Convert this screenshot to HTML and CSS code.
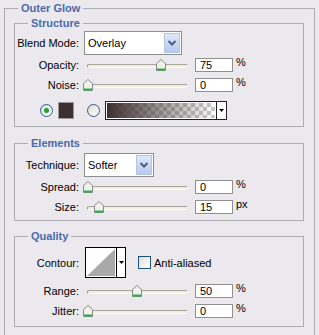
FILE: index.html
```html
<!doctype html>
<html>
<head>
	<meta charset="utf-8">
	<title>Outer Glow</title>
	<link rel="stylesheet" href="styles.css">
</head>
<body>
	<div class="panel">
		<div class="group-title">Outer Glow</div>

		<div class="group structure">
			<div class="group-title">Structure</div>
			<div class="row row-select">
				<span class="label">Blend Mode:</span>
				<div class="select select-blend">
					<span class="select-text">Overlay</span>
					<span class="select-btn"><svg width="14" height="18" viewBox="0 0 14 18"><path d="M3.5 7 L7 10.5 L10.5 7" fill="none" stroke="#4a5d82" stroke-width="2"/></svg></span>
				</div>
			</div>
			<div class="row">
				<span class="label">Opacity:</span>
				<div class="slider">
					<div class="track"></div>
					<svg class="thumb" style="left:69px" width="10" height="12" viewBox="0 0 10 12"><path d="M5 0.5 L9.5 4.5 V11.5 H0.5 V4.5 Z" fill="#f1f1ec" stroke="#8a8a86"/><path d="M1 10.5 H9" stroke="#2fae4c" stroke-width="2"/></svg>
				</div>
				<input class="num" type="text" value="75">
				<span class="unit">%</span>
			</div>
			<div class="row">
				<span class="label">Noise:</span>
				<div class="slider">
					<div class="track"></div>
					<svg class="thumb" style="left:-4px" width="10" height="12" viewBox="0 0 10 12"><path d="M5 0.5 L9.5 4.5 V11.5 H0.5 V4.5 Z" fill="#f1f1ec" stroke="#8a8a86"/><path d="M1 10.5 H9" stroke="#2fae4c" stroke-width="2"/></svg>
				</div>
				<input class="num" type="text" value="0">
				<span class="unit">%</span>
			</div>
			<div class="color-row">
				<span class="radio"><span class="radio-dot"></span></span>
				<span class="swatch"></span>
				<span class="radio radio-second"></span>
				<div class="gradient">
					<span class="gradient-fill"></span>
					<span class="gradient-arrow"><svg width="5" height="3" viewBox="0 0 5 3"><path d="M0 0 H5 L2.5 3 Z" fill="#000"/></svg></span>
				</div>
			</div>
		</div>

		<div class="group elements">
			<div class="group-title">Elements</div>
			<div class="row row-select">
				<span class="label">Technique:</span>
				<div class="select select-tech">
					<span class="select-text">Softer</span>
					<span class="select-btn"><svg width="14" height="18" viewBox="0 0 14 18"><path d="M3.5 7 L7 10.5 L10.5 7" fill="none" stroke="#4a5d82" stroke-width="2"/></svg></span>
				</div>
			</div>
			<div class="row">
				<span class="label">Spread:</span>
				<div class="slider">
					<div class="track"></div>
					<svg class="thumb" style="left:-4px" width="10" height="12" viewBox="0 0 10 12"><path d="M5 0.5 L9.5 4.5 V11.5 H0.5 V4.5 Z" fill="#f1f1ec" stroke="#8a8a86"/><path d="M1 10.5 H9" stroke="#2fae4c" stroke-width="2"/></svg>
				</div>
				<input class="num" type="text" value="0">
				<span class="unit">%</span>
			</div>
			<div class="row">
				<span class="label">Size:</span>
				<div class="slider">
					<div class="track"></div>
					<svg class="thumb" style="left:7px" width="10" height="12" viewBox="0 0 10 12"><path d="M5 0.5 L9.5 4.5 V11.5 H0.5 V4.5 Z" fill="#f1f1ec" stroke="#8a8a86"/><path d="M1 10.5 H9" stroke="#2fae4c" stroke-width="2"/></svg>
				</div>
				<input class="num" type="text" value="15">
				<span class="unit">px</span>
			</div>
		</div>

		<div class="group quality">
			<div class="group-title">Quality</div>
			<div class="row row-contour">
				<span class="label">Contour:</span>
				<div class="contour">
					<svg class="contour-preview" width="30" height="29" viewBox="0 0 30 29"><rect width="30" height="29" fill="#fff"/><path d="M1 28 L29 1 V28 Z" fill="#a9a9a9"/></svg>
					<span class="contour-arrow"><svg width="5" height="3" viewBox="0 0 5 3"><path d="M0 0 H5 L2.5 3 Z" fill="#000"/></svg></span>
				</div>
				<span class="checkbox"></span>
				<span class="check-label">Anti-aliased</span>
			</div>
			<div class="row row-range">
				<span class="label">Range:</span>
				<div class="slider">
					<div class="track"></div>
					<svg class="thumb" style="left:45px" width="10" height="12" viewBox="0 0 10 12"><path d="M5 0.5 L9.5 4.5 V11.5 H0.5 V4.5 Z" fill="#f1f1ec" stroke="#8a8a86"/><path d="M1 10.5 H9" stroke="#2fae4c" stroke-width="2"/></svg>
				</div>
				<input class="num" type="text" value="50">
				<span class="unit">%</span>
			</div>
			<div class="row">
				<span class="label">Jitter:</span>
				<div class="slider">
					<div class="track"></div>
					<svg class="thumb" style="left:-4px" width="10" height="12" viewBox="0 0 10 12"><path d="M5 0.5 L9.5 4.5 V11.5 H0.5 V4.5 Z" fill="#f1f1ec" stroke="#8a8a86"/><path d="M1 10.5 H9" stroke="#2fae4c" stroke-width="2"/></svg>
				</div>
				<input class="num" type="text" value="0">
				<span class="unit">%</span>
			</div>
		</div>
	</div>
</body>
</html>
```

FILE: styles.css
```css
body {
	margin: 0;
	background: #ebe9ed;
	font-family: "Liberation Sans", Arial, sans-serif;
	font-size: 11px;
	color: #000;
	overflow: hidden;
}
.panel {
	position: relative;
	box-sizing: border-box;
	width: 311px;
	height: 327px;
	margin: 8px 0 0 4px;
	padding: 14px 10px 0 9px;
	border: 1px solid #aeacb3;
	border-bottom: 0;
}
.group {
	position: relative;
	border: 1px solid #aeacb3;
}
.group-title {
	position: absolute;
	top: -7px;
	left: 13px;
	padding: 0 3px;
	line-height: 13px;
	background: #ebe9ed;
	color: #4a6aae;
	font-weight: bold;
}
.structure {
	padding: 7px 0 4px;
}
.elements {
	margin-top: 16px;
	padding: 9px 0 3px;
}
.quality {
	margin-top: 15px;
	padding: 10px 0 5px;
}
.row {
	display: flex;
	align-items: center;
	height: 20px;
}
.row-select {
	height: 24px;
}
.row-contour {
	height: 31px;
}
.row-range {
	margin-top: 3px;
}
.label {
	flex: none;
	width: 64px;
	text-align: right;
}
.select {
	display: flex;
	box-sizing: border-box;
	height: 24px;
	margin-left: 5px;
	border: 1px solid #8d8d92;
	background: #fff;
}
.select-blend {
	width: 98px;
}
.select-tech {
	width: 70px;
}
.select-text {
	padding-left: 3px;
	line-height: 22px;
}
.select-btn {
	display: flex;
	align-items: center;
	justify-content: center;
	box-sizing: border-box;
	width: 16px;
	height: 20px;
	margin: 1px 1px 0 auto;
	border: 1px solid #b3c4e4;
	background: linear-gradient(#dde7f9, #b7caee);
}
.slider {
	position: relative;
	flex: none;
	width: 100px;
	height: 12px;
	margin-left: 8px;
}
.track {
	box-sizing: border-box;
	height: 4px;
	margin-top: 5px;
	border-top: 1px solid #a7a59c;
	border-left: 1px solid #8c8a84;
	border-bottom: 1px solid #fbfaf4;
	border-radius: 2px 0 0 2px;
	background: #f1efe1;
}
.thumb {
	position: absolute;
	top: 0;
}
.num {
	box-sizing: border-box;
	width: 38px;
	height: 14px;
	margin: 0 0 0 8px;
	padding: 0 0 0 4px;
	border: 1px solid #8f8f8f;
	background: #fff;
	font-family: inherit;
	font-size: 11px;
	color: #000;
	outline: none;
}
.unit {
	align-self: flex-start;
	margin: 1px 0 0 3px;
	line-height: 13px;
}
.color-row {
	display: flex;
	align-items: center;
	height: 24px;
	margin-top: 3px;
	padding-left: 25px;
}
.radio {
	display: flex;
	align-items: center;
	justify-content: center;
	box-sizing: border-box;
	width: 13px;
	height: 13px;
	border: 1px solid #2f5c8e;
	border-radius: 50%;
	background: linear-gradient(135deg, #dcdcd6, #fff);
}
.radio-dot {
	width: 5px;
	height: 5px;
	border-radius: 50%;
	background: #22a22a;
}
.radio-second {
	margin-left: 13px;
}
.swatch {
	box-sizing: border-box;
	width: 16px;
	height: 17px;
	margin-left: 5px;
	border: 1px solid #9a9a9a;
	background: #3e2f30;
}
.gradient {
	display: flex;
	box-sizing: border-box;
	width: 122px;
	height: 19px;
	margin-left: 5px;
	border: 1px solid #222;
	background: #fff;
}
.gradient-fill {
	flex: 1;
	margin: 1px;
	background-image: linear-gradient(to right, #3e2f30, rgba(62, 47, 48, 0)), conic-gradient(#c8c8c8 25%, #fff 0 50%, #c8c8c8 0 75%, #fff 0);
	background-size: 100% 100%, 8px 8px;
}
.gradient-arrow {
	display: flex;
	align-items: center;
	justify-content: center;
	width: 9px;
	border-left: 1px solid #222;
}
.contour {
	display: flex;
	box-sizing: border-box;
	width: 41px;
	height: 31px;
	margin-left: 6px;
	border: 1px solid #000;
	background: #fff;
}
.contour-arrow {
	display: flex;
	align-items: center;
	justify-content: center;
	flex: 1;
	border-left: 1px solid #000;
}
.checkbox {
	box-sizing: border-box;
	width: 13px;
	height: 13px;
	margin-left: 12px;
	border: 1px solid #1c5180;
	background: linear-gradient(135deg, #dcdcd6, #fff);
}
.check-label {
	margin-left: 3px;
}
```
